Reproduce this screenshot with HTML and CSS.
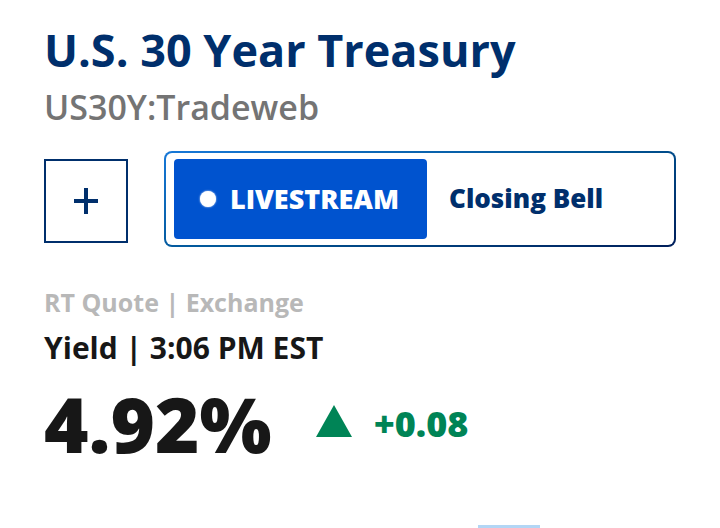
FILE: index.html
```html
<!DOCTYPE html>
<html lang="en">
<head>
    <meta charset="UTF-8">
    <title>U.S. 30 Year Treasury</title>
    <link rel="stylesheet" href="styles.css">
</head>
<body>

<main class="quote-page">
    <h1 class="quote-name">U.S. 30 Year Treasury</h1>
    <div class="quote-symbol">US30Y:Tradeweb</div>

    <div class="actions">
        <button class="add-button" type="button" aria-label="Add to watchlist">
            <svg width="24" height="26" viewBox="0 0 24 26" aria-hidden="true">
                <path d="M12 0v26M0 13h24" stroke="currentColor" stroke-width="4" fill="none"/>
            </svg>
        </button>
        <div class="live">
            <a class="live-button" href="#"><span class="live-dot"></span>LIVESTREAM</a>
            <a class="live-show" href="#">Closing Bell</a>
        </div>
    </div>

    <div class="quote-source">RT Quote | Exchange</div>
    <div class="quote-time">Yield | 3:06 PM EST</div>
    <div class="quote-row">
        <span class="quote-price">4.92%</span>
        <span class="quote-change">
            <svg width="36" height="32" viewBox="0 0 36 32" aria-hidden="true">
                <path d="M18 0L36 32H0z" fill="currentColor"/>
            </svg>
            +0.08
        </span>
    </div>
</main>
<div class="tab-marker"></div>

</body>
</html>
```

FILE: styles.css
```css
body {
    display: flex;
    flex-direction: column;
    min-height: 100vh;
    margin: 0;
    background: #fff;
    color: #171717;
    font-family: "Open Sans", "Noto Sans", sans-serif;
}
.quote-page {
    flex: 1;
    padding: 22px 44px 0;
}
.quote-name {
    margin: 0;
    color: #002f6c;
    font-size: 45px;
    font-weight: 700;
    line-height: 56px;
}
.quote-symbol {
    color: #747474;
    font-size: 34px;
    font-weight: 600;
    line-height: 58px;
}
.actions {
    display: flex;
    align-items: flex-start;
    gap: 36px;
    margin-top: 15px;
}
.add-button {
    display: flex;
    align-items: center;
    justify-content: center;
    box-sizing: border-box;
    width: 84px;
    height: 84px;
    margin-top: 8px;
    padding: 0;
    border: 2px solid #002f6c;
    background: #fff;
    color: #002f6c;
}
.live {
    display: flex;
    flex: 1;
    box-sizing: border-box;
    height: 96px;
    padding: 6px 8px;
    border: 2px solid transparent;
    border-radius: 8px;
    background: linear-gradient(#fff, #fff) padding-box, linear-gradient(165deg, #1778d8, #005594 50%, #001e5a) border-box;
}
.live a {
    text-decoration: none;
    white-space: nowrap;
}
.live-button {
    display: flex;
    align-items: center;
    gap: 14px;
    padding: 0 28px 0 26px;
    border-radius: 4px;
    background: #0053cf;
    color: #fff;
    font-size: 27px;
    font-weight: 800;
    line-height: 78px;
}
.live-dot {
    width: 16px;
    height: 16px;
    border-radius: 50%;
    background: #fff;
    box-shadow: 0 0 2px #fff;
}
.live-show {
    margin-left: 22px;
    color: #002f6c;
    font-size: 26px;
    font-weight: 800;
    line-height: 78px;
}
.quote-source {
    margin-top: 32px;
    color: #b8b8b8;
    font-size: 25px;
    font-weight: 700;
    line-height: 46px;
}
.quote-time {
    font-size: 30px;
    font-weight: 700;
    line-height: 46px;
}
.quote-row {
    display: flex;
    align-items: center;
    gap: 44px;
    line-height: 106px;
}
.quote-price {
    font-size: 76px;
    font-weight: 800;
}
.quote-change {
    display: flex;
    align-items: baseline;
    gap: 22px;
    color: #008456;
    font-size: 36px;
    font-weight: 800;
}
.tab-marker {
    width: 62px;
    height: 3px;
    margin-left: 478px;
    background: #b3d6f5;
}
```
